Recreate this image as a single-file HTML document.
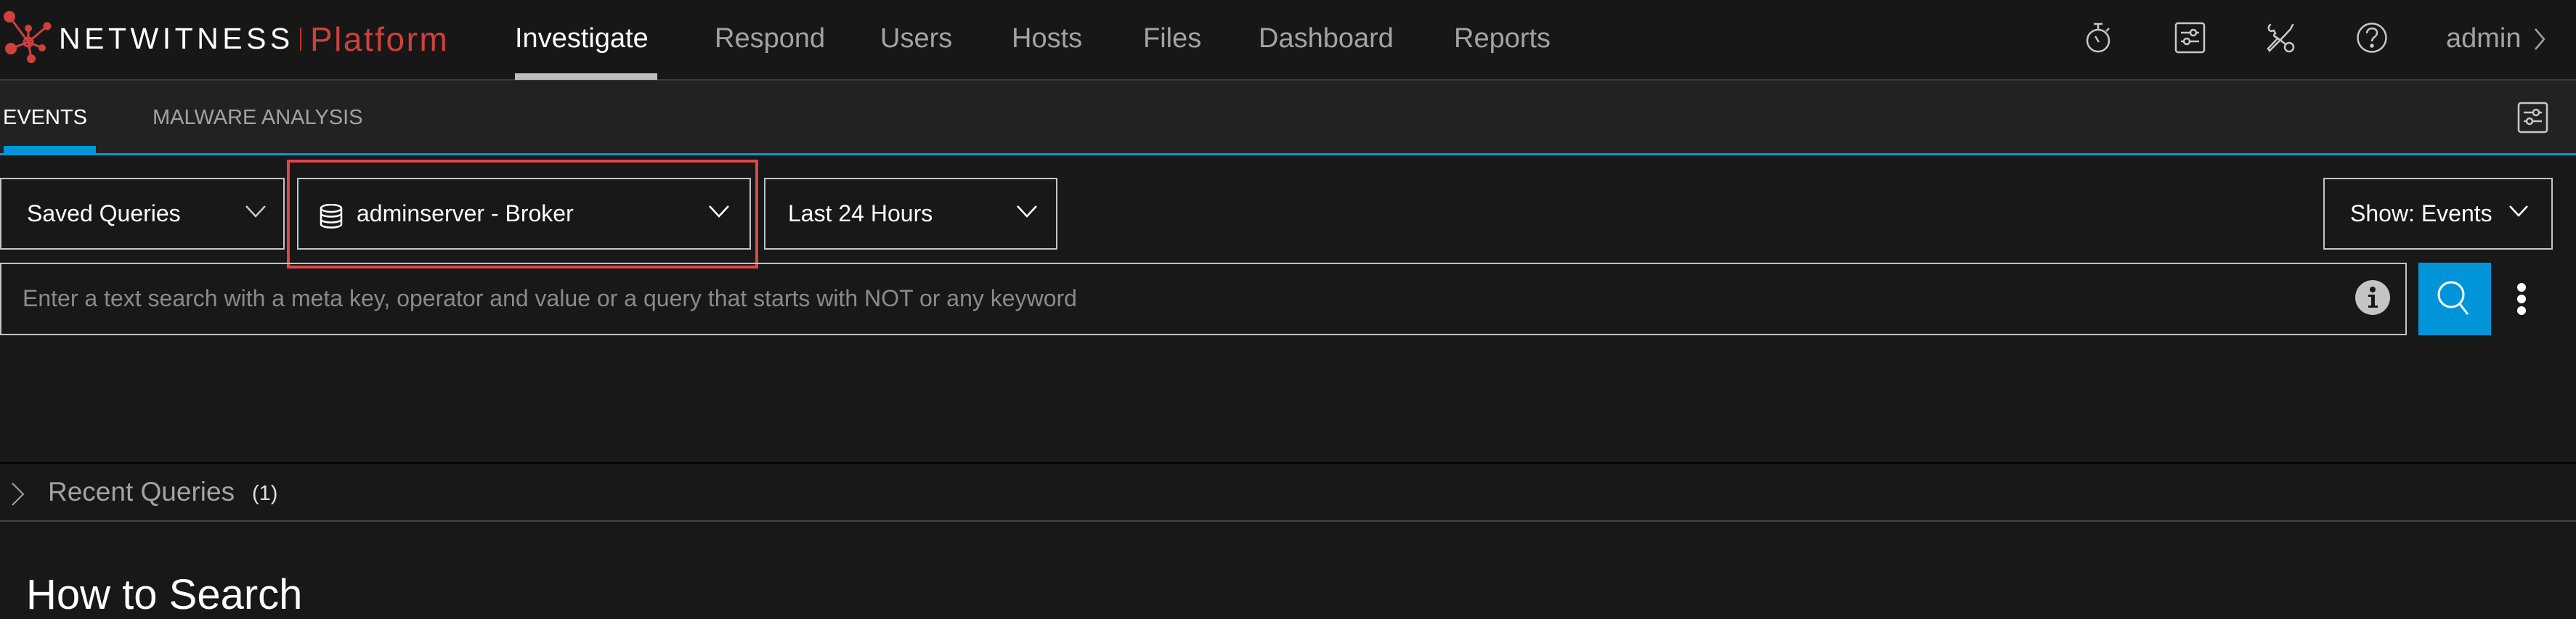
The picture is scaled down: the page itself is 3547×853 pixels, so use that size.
<!DOCTYPE html>
<html><head><meta charset="utf-8"><style>
*{margin:0;padding:0;box-sizing:border-box}
body{width:3547px;height:850px;background:#181818;font-family:"Liberation Sans",sans-serif;position:relative;overflow:hidden;color:#fff}
.a{position:absolute;white-space:nowrap}
.nav{font-size:38px;color:#a3a3a3;top:32px}
.box{position:absolute;border:2px solid #c4c4c4;top:245px;height:99px}
.bt{position:absolute;top:29px;font-size:32px;color:#fff}
.chev{position:absolute;top:34px}
</style></head><body>
<div class="a" style="left:0;top:0;width:3547px;height:109px;background:#171717"></div>
<div class="a" style="left:0;top:109px;width:3547px;height:2px;background:#3c3c3c"></div>
<svg class="a" style="left:0;top:10px" width="80" height="90" viewBox="0 0 80 90">
<g stroke="#d0403c" stroke-width="3" fill="none"><line x1="13" y1="13" x2="39" y2="48"/><line x1="39" y1="29" x2="39" y2="48"/><line x1="65" y1="26" x2="39" y2="48"/><line x1="15" y1="57" x2="39" y2="48"/><line x1="58" y1="56" x2="39" y2="48"/><line x1="43" y1="71" x2="39" y2="48"/><circle cx="39" cy="48" r="6"/></g>
<g fill="#d0403c"><circle cx="13" cy="13" r="8"/><circle cx="39" cy="29" r="5"/><circle cx="65" cy="26" r="5.5"/><circle cx="15" cy="57" r="8"/><circle cx="58" cy="56" r="5"/><circle cx="43" cy="71" r="6"/></g></svg>
<div class="a" style="left:81px;top:30px;font-size:41px;letter-spacing:5.5px;color:#fff">NETWITNESS</div>
<div class="a" style="left:413px;top:38px;width:2px;height:32px;background:#c0392b"></div>
<div class="a" style="left:427px;top:27px;font-size:46px;letter-spacing:2.5px;color:#d0403c">Platform</div>
<div class="a nav" style="left:709px;color:#fff">Investigate</div>
<div class="a" style="left:709px;top:101px;width:196px;height:9px;background:#bdbdbd"></div>
<div class="a nav" style="left:984px">Respond</div>
<div class="a nav" style="left:1212px">Users</div>
<div class="a nav" style="left:1393px">Hosts</div>
<div class="a nav" style="left:1574px">Files</div>
<div class="a nav" style="left:1733px">Dashboard</div>
<div class="a nav" style="left:2002px">Reports</div>
<svg class="a" style="left:2870px;top:30px" width="40" height="44" viewBox="0 0 40 44" fill="none" stroke="#c8c8c8" stroke-width="2.5"><circle cx="19" cy="26" r="15"/><line x1="19" y1="11" x2="19" y2="4"/><line x1="13" y1="3" x2="25" y2="3"/><line x1="30" y1="13" x2="34" y2="9"/><line x1="15" y1="20" x2="20" y2="28"/></svg>
<svg class="a" style="left:2994px;top:30px" width="44" height="44" viewBox="0 0 44 44" fill="none" stroke="#c8c8c8" stroke-width="2.5"><rect x="2" y="2" width="39" height="40" rx="3"/><line x1="9" y1="15" x2="34" y2="15"/><circle cx="26" cy="15" r="4" fill="#171717"/><line x1="9" y1="27" x2="34" y2="27"/><circle cx="17" cy="27" r="4" fill="#171717"/></svg>
<svg class="a" style="left:3118px;top:30px" width="44" height="44" viewBox="0 0 44 44" fill="none" stroke="#c8c8c8" stroke-width="2.5" stroke-linecap="round"><path d="M39 4 L36 10 L22 25"/><path d="M22 25 L18 23 L5 37 L7 40 L20 27 Z"/><path d="M8 4 C4 8 6 12 9 13 L13 12 L15 16 C12 18 13 21 16 21"/><path d="M16 21 L28 30"/><circle cx="34" cy="35" r="6"/></svg>
<svg class="a" style="left:3244px;top:30px" width="44" height="44" viewBox="0 0 44 44" fill="none" stroke="#c8c8c8" stroke-width="2.5"><circle cx="22" cy="22" r="19.5"/><path d="M15 16 C15 7 29 7 29 15 C29 21 22 21 22 27"/><circle cx="22" cy="33" r="1.5" fill="#c8c8c8"/></svg>
<div class="a nav" style="left:3368px">admin</div>
<svg class="a" style="left:3488px;top:38px" width="18" height="32" viewBox="0 0 18 32" fill="none" stroke="#a3a3a3" stroke-width="2.5"><path d="M3 2 L15 16 L3 30"/></svg>

<div class="a" style="left:0;top:111px;width:3547px;height:100px;background:#222"></div>
<div class="a" style="left:0;top:211px;width:3547px;height:3px;background:#0095d9"></div>
<div class="a" style="left:5px;top:201px;width:127px;height:10px;background:#0095d9"></div>
<div class="a" style="left:4px;top:146px;font-size:29px;color:#fff">EVENTS</div>
<div class="a" style="left:210px;top:146px;font-size:29px;color:#a3a3a3">MALWARE ANALYSIS</div>
<svg class="a" style="left:3466px;top:140px" width="44" height="44" viewBox="0 0 44 44" fill="none" stroke="#c8c8c8" stroke-width="2.5"><rect x="2" y="2" width="39" height="40" rx="3"/><line x1="9" y1="15" x2="34" y2="15"/><circle cx="26" cy="15" r="4" fill="#222"/><line x1="9" y1="27" x2="34" y2="27"/><circle cx="17" cy="27" r="4" fill="#222"/></svg>

<div class="a" style="left:395px;top:220px;width:649px;height:150px;border:4px solid #e04545"></div>
<div class="box" style="left:0;width:392px"><div class="bt" style="left:35px">Saved Queries</div><svg class="chev" style="left:335px" width="30" height="20" viewBox="0 0 30 20" fill="none" stroke="#c8c8c8" stroke-width="2.5"><path d="M2 3 L15 17 L28 3"/></svg></div>
<div class="box" style="left:409px;width:625px"><svg class="a" style="left:28px;top:34px" width="36" height="34" viewBox="0 0 36 34" fill="none" stroke="#fff" stroke-width="2.5"><ellipse cx="17" cy="6" rx="14" ry="5"/><path d="M3 6 V28 C3 34 31 34 31 28 V6"/><path d="M3 13 C3 19 31 19 31 13"/><path d="M3 21 C3 27 31 27 31 21"/></svg><div class="bt" style="left:80px">adminserver - Broker</div><svg class="chev" style="left:564px" width="30" height="20" viewBox="0 0 30 20" fill="none" stroke="#fff" stroke-width="2.5"><path d="M2 3 L15 17 L28 3"/></svg></div>
<div class="box" style="left:1052px;width:404px"><div class="bt" style="left:31px">Last 24 Hours</div><svg class="chev" style="left:345px" width="30" height="20" viewBox="0 0 30 20" fill="none" stroke="#fff" stroke-width="2.5"><path d="M2 3 L15 17 L28 3"/></svg></div>
<div class="box" style="left:3199px;width:316px"><div class="bt" style="left:35px">Show: Events</div><svg class="chev" style="left:253px" width="28" height="20" viewBox="0 0 28 20" fill="none" stroke="#fff" stroke-width="2.5"><path d="M2 3 L14 16 L26 3"/></svg></div>

<div class="a" style="left:0;top:362px;width:3314px;height:100px;border:2px solid #c4c4c4"></div>
<div class="a" style="left:31px;top:393px;font-size:32px;color:#8a8a8a">Enter a text search with a meta key, operator and value or a query that starts with NOT or any keyword</div>
<svg class="a" style="left:3242px;top:385px" width="50" height="50" viewBox="0 0 50 50"><circle cx="25" cy="25" r="24" fill="#c4c4c4"/><circle cx="25" cy="14" r="4" fill="#181818"/><path d="M19 21 H28 V36 H32 V39 H19 V36 H23 V24 H19 Z" fill="#181818"/></svg>
<div class="a" style="left:3330px;top:362px;width:100px;height:100px;background:#0095d9"></div>
<svg class="a" style="left:3352px;top:384px" width="56" height="56" viewBox="0 0 56 56" fill="none" stroke="#fff" stroke-width="3"><circle cx="23" cy="22" r="17"/><line x1="35" y1="35" x2="46" y2="49"/></svg>
<div class="a" style="left:3466px;top:390px;width:12px;height:12px;border-radius:6px;background:#fff"></div>
<div class="a" style="left:3466px;top:406px;width:12px;height:12px;border-radius:6px;background:#fff"></div>
<div class="a" style="left:3466px;top:422px;width:12px;height:12px;border-radius:6px;background:#fff"></div>

<div class="a" style="left:0;top:637px;width:3547px;height:2px;background:#000"></div>
<svg class="a" style="left:14px;top:664px" width="22" height="34" viewBox="0 0 22 34" fill="none" stroke="#a3a3a3" stroke-width="2"><path d="M3 2 L18 17 L3 32"/></svg>
<div class="a" style="left:66px;top:657px;font-size:37px;color:#a3a3a3">Recent Queries</div>
<div class="a" style="left:347px;top:664px;font-size:29px;color:#e0e0e0">(1)</div>
<div class="a" style="left:0;top:717px;width:3547px;height:2px;background:#444"></div>
<div class="a" style="left:36px;top:786px;font-size:58px;color:#fff">How to Search</div>
</body></html>
